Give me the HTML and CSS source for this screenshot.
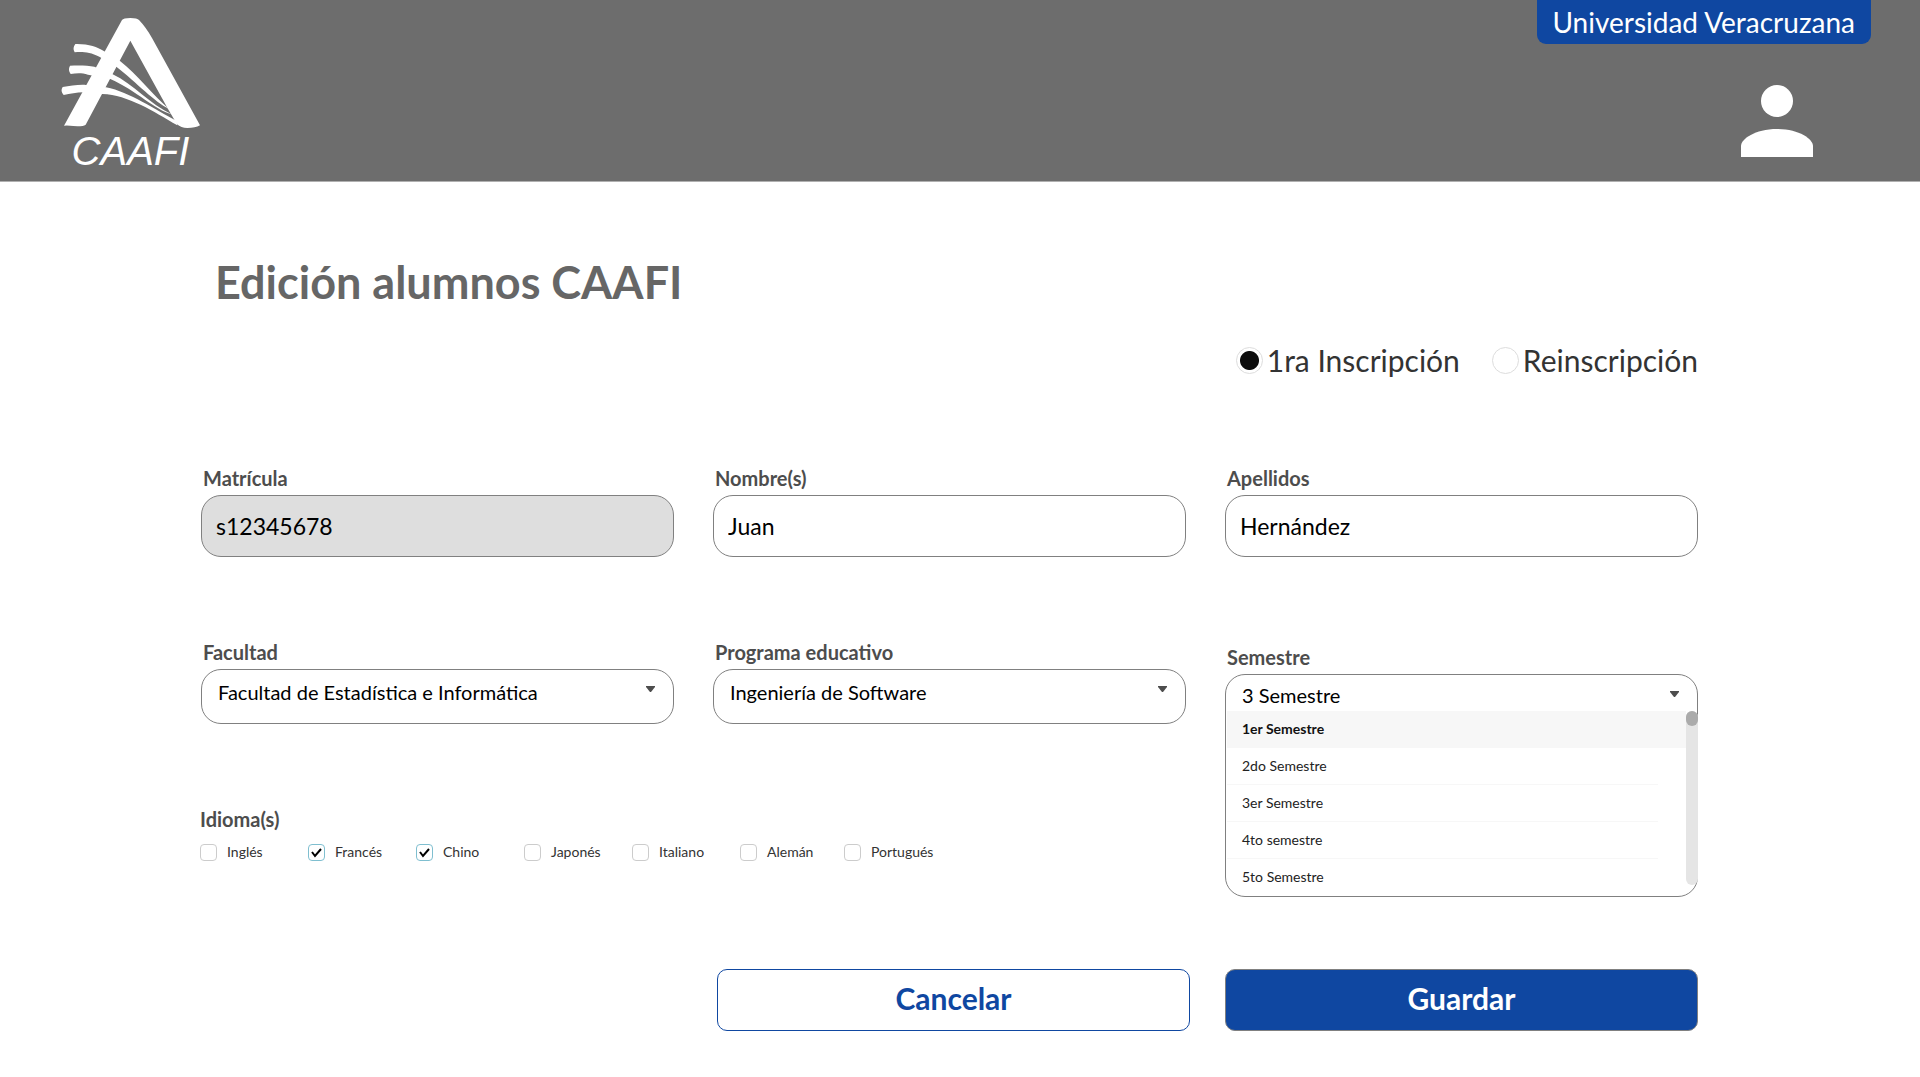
FILE: index.html
```html
<!DOCTYPE html>
<html lang="es">
<head>
<meta charset="utf-8">
<meta name="viewport" content="width=device-width, initial-scale=1">
<title>Edición alumnos CAAFI</title>
<link rel="stylesheet" href="styles.css">
</head>
<body>
<header class="topbar">
  <a class="logo" href="#" aria-label="CAAFI">
    <svg class="logo-mark" viewBox="60 51 423 336" fill="currentColor" aria-hidden="true">
      <path d="M72 377 246 60Q250 54 271 54T297 60Q318 82 336 114L480 376Q466 384 442 384Q423 384 411 373L384 327 271 122 137 374Q128 380 100 378 84 376 72 377Z"/>
      <path d="M106 132C145 131 172 141 190 152L240 183C290 222 340 286 386 326 345 307 290 248 230 201L178 170C150 157 130 155 104 157Q96 145 106 132Z"/>
      <path d="M90 197C120 195 145 197 163 200L218 223C280 252 330 313 395 343 345 330 290 272 211 237L144 224C125 218 110 219 92 222Q83 210 90 197Z"/>
      <path d="M68 261C90 259 115 253 138 255L198 262C270 276 345 330 409 362L412 376C340 334 265 285 187 282L130 277C110 277 90 282 71 285Q60 273 68 261Z"/>
    </svg>
    <span class="logo-name">CAAFI</span>
  </a>
  <div class="topbar-side">
    <a class="badge" href="#">Universidad Veracruzana</a>
    <button class="user" type="button" aria-label="Perfil">
      <svg viewBox="0 0 72 72" fill="currentColor" aria-hidden="true"><circle cx="36" cy="16" r="16"/><path d="M0 72V61C0 54 14 44 36 44S72 54 72 61V72Z"/></svg>
    </button>
  </div>
</header>

<main class="content">
  <h1 class="title">Edición alumnos CAAFI</h1>
  <form>
    <div class="enrollment" role="radiogroup" aria-label="Tipo de inscripción">
      <label class="radio"><input type="radio" name="tipo" checked>1ra Inscripción</label>
      <label class="radio"><input type="radio" name="tipo">Reinscripción</label>
    </div>

    <div class="fields">
      <div class="field">
        <label for="matricula">Matrícula</label>
        <input id="matricula" class="box" type="text" value="s12345678" readonly>
      </div>
      <div class="field">
        <label for="nombre">Nombre(s)</label>
        <input id="nombre" class="box" type="text" value="Juan">
      </div>
      <div class="field">
        <label for="apellidos">Apellidos</label>
        <input id="apellidos" class="box" type="text" value="Hernández">
      </div>

      <div class="field">
        <label for="facultad">Facultad</label>
        <div class="box picker">
          <select id="facultad"><option>Facultad de Estadística e Informática</option></select>
          <svg class="caret" viewBox="0 0 9 6" aria-hidden="true"><path d="M0 0H9V1L5 6H4L0 1Z"/></svg>
        </div>
      </div>
      <div class="field">
        <label for="programa">Programa educativo</label>
        <div class="box picker">
          <select id="programa"><option>Ingeniería de Software</option></select>
          <svg class="caret" viewBox="0 0 9 6" aria-hidden="true"><path d="M0 0H9V1L5 6H4L0 1Z"/></svg>
        </div>
      </div>
      <div class="field field-open">
        <label for="semestre">Semestre</label>
        <div class="box picker picker-open">
          <select id="semestre"><option>3 Semestre</option></select>
          <svg class="caret" viewBox="0 0 9 6" aria-hidden="true"><path d="M0 0H9V1L5 6H4L0 1Z"/></svg>
          <div class="menu">
            <ul class="options" role="listbox" aria-label="Semestre">
              <li role="option" aria-selected="true">1er Semestre</li>
              <li role="option">2do Semestre</li>
              <li role="option">3er Semestre</li>
              <li role="option">4to semestre</li>
              <li role="option">5to Semestre</li>
            </ul>
            <div class="scrollbar"><div class="thumb"></div></div>
          </div>
        </div>
      </div>

      <fieldset class="languages">
        <legend>Idioma(s)</legend>
        <div class="checks">
          <label><input type="checkbox">Inglés</label>
          <label><input type="checkbox" checked>Francés</label>
          <label><input type="checkbox" checked>Chino</label>
          <label><input type="checkbox">Japonés</label>
          <label><input type="checkbox">Italiano</label>
          <label><input type="checkbox">Alemán</label>
          <label><input type="checkbox">Portugués</label>
        </div>
      </fieldset>
    </div>

    <div class="actions">
      <button class="btn btn-outline" type="button">Cancelar</button>
      <button class="btn btn-solid" type="submit">Guardar</button>
    </div>
  </form>
</main>
</body>
</html>
```
FILE: styles.css
```css
* { box-sizing: border-box; }

body {
  margin: 0;
  background: #fff;
  color: #000;
  font-family: Lato, "Liberation Sans", sans-serif;
}

input, select, button { font: inherit; color: inherit; }

/* Top bar */
.topbar {
  display: flex;
  justify-content: space-between;
  min-height: 182px;
  padding: 0 49px 0 60px;
  background: #6d6d6d;
  border-bottom: 1px solid #b0b0b0;
  color: #fff;
}

.logo {
  display: flex;
  flex-direction: column;
  align-items: center;
  padding-top: 17px;
  color: inherit;
  text-decoration: none;
}

.logo-mark { width: 141px; height: 112px; }

.logo-name {
  font: italic 40px/44px "Liberation Sans", sans-serif;
}

.topbar-side {
  display: flex;
  flex-direction: column;
  align-items: flex-end;
  gap: 41px;
}

.badge {
  height: 44px;
  padding: 0 16px 0 15px;
  border-radius: 0 0 9px 9px;
  background: #0f47a1;
  color: inherit;
  font-size: 28px;
  line-height: 44px;
  text-decoration: none;
}

.user {
  width: 72px;
  height: 72px;
  margin-right: 58px;
  padding: 0;
  border: 0;
  background: none;
}

.user svg { display: block; }

/* Page */
.content { padding: 72px 222px 46px 201px; }

.title {
  margin: 0;
  padding-left: 14px;
  color: #666;
  font-size: 45px;
  font-weight: 700;
  line-height: 56px;
}

.enrollment {
  display: flex;
  justify-content: flex-end;
  gap: 32px;
  margin-top: 32px;
  color: #333;
  font-size: 30px;
  line-height: 36px;
}

.radio { display: flex; align-items: center; gap: 4px; }

.radio input {
  appearance: none;
  width: 27px;
  height: 27px;
  margin: 0;
  border: 1px solid #ddd;
  border-radius: 50%;
}

.radio input:checked {
  background: radial-gradient(circle, #0d0d0d 9px, transparent 10px);
}

/* Fields */
.fields {
  display: grid;
  grid-template-columns: repeat(3, 1fr);
  grid-template-rows: auto auto 1fr;
  column-gap: 39px;
  margin-top: 88px;
}

.field {
  display: flex;
  flex-direction: column;
  gap: 5px;
  margin-bottom: 83px;
}

.field label, .languages legend {
  padding: 0 2px;
  color: #4d4d4d;
  font-size: 20px;
  font-weight: 700;
  line-height: 24px;
}

.box {
  width: 100%;
  border: 1px solid #808080;
  border-radius: 20px;
  background: #fff;
}

input.box {
  height: 62px;
  padding: 0 14px;
  font-size: 23px;
}

input.box:read-only { background: #dedede; }

.picker {
  display: grid;
  min-height: 55px;
}

.picker select, .caret { grid-area: 1 / 1; }

.picker select {
  appearance: none;
  height: 44px;
  padding: 0 40px 0 16px;
  border: 0;
  background: none;
  font-size: 20px;
}

.caret {
  justify-self: end;
  width: 9px;
  height: 6px;
  margin: 16px 18px 0 0;
  fill: #4d4d4d;
}

.field-open {
  grid-row: 2 / 4;
  grid-column: 3;
  align-self: start;
  margin: 5px 0 0;
}

.picker-open { grid-template-rows: 36px auto; }

.picker-open select { height: 40px; }

.menu {
  display: flex;
  margin-right: -1px;
  padding-bottom: 11px;
}

.options {
  flex: 1;
  height: 174px;
  margin: 0 0 0 1px;
  padding: 0;
  list-style: none;
  font-size: 14px;
  line-height: 36px;
  color: #222;
}

.options li {
  margin-right: 28px;
  padding-left: 15px;
  border-bottom: 1px solid #f7f7f7;
}

.options li[aria-selected="true"] {
  margin-right: 0;
  background: #f7f7f7;
  color: #111;
  font-weight: 700;
}

.options li:last-child { border-bottom: 0; }

.scrollbar {
  width: 12px;
  height: 174px;
  border-radius: 6px;
  background: #e5e5e5;
}

.thumb {
  height: 15px;
  border-radius: 6px;
  background: #ababab;
}

/* Languages */
.languages {
  grid-column: 1 / 3;
  min-width: 0;
  margin: 0 0 0 -1px;
  padding: 0;
  border: 0;
}

.languages legend { padding: 0; }

.checks {
  display: flex;
  margin-top: 9px;
  color: #333;
  font-size: 14px;
  line-height: 24px;
}

.checks label {
  display: flex;
  align-items: center;
  gap: 10px;
  width: 108px;
}

.checks label:nth-child(6) { width: 104px; }

.checks input {
  appearance: none;
  width: 17px;
  height: 17px;
  margin: 0;
  border: 1px solid #ccc;
  border-radius: 4px;
}

.checks input:checked {
  border-color: #7fbfd0;
  background: url("data:image/svg+xml,%3Csvg xmlns='http://www.w3.org/2000/svg' viewBox='0 0 15 15'%3E%3Cpath d='M3 7l3 4 6-7' fill='none' stroke='black' stroke-width='2'/%3E%3C/svg%3E") center / 15px no-repeat;
}

/* Actions */
.actions {
  display: grid;
  grid-template-columns: repeat(3, 1fr);
  column-gap: 39px;
  margin-top: 72px;
}

.btn {
  height: 62px;
  padding: 0 0 4px;
  border-radius: 10px;
  font-size: 30px;
  font-weight: 700;
}

.btn-outline {
  grid-column: 2;
  margin: 0 -4px 0 4px;
  border: 1px solid #0f47a1;
  background: #fff;
  color: #0f47a1;
}

.btn-solid {
  border: 1px solid #808080;
  background: #0f47a1;
  color: #fff;
}
```
